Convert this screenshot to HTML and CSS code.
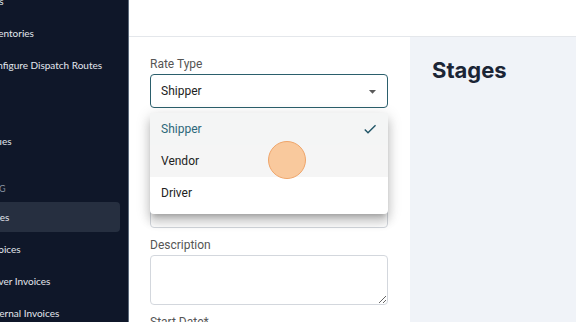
FILE: index.html
```html
<!DOCTYPE html>
<html>
<head>
<meta charset="utf-8">
<link rel="stylesheet" href="styles.css">
</head>
<body>
<aside class="sidebar">
  <nav class="nav">
    <div class="item">Bins</div>
    <div class="item">Inventories</div>
    <div class="item">Configure Dispatch Routes</div>
    <div class="section">MISC</div>
    <div class="item">Issues</div>
    <div class="section">BILLING</div>
    <div class="item active">Rates</div>
    <div class="item">Invoices</div>
    <div class="item">Driver Invoices</div>
    <div class="item">External Invoices</div>
  </nav>
</aside>
<main class="main">
  <header class="topbar"></header>
  <div class="content">
    <section class="form">
      <div class="field select-field">
        <label class="label">Rate Type</label>
        <div class="select">
          <span>Shipper</span>
          <svg class="arrow" viewBox="0 0 24 24" width="17" height="17"><path d="M7 10l5 5 5-5z" fill="#5a5a5a"/></svg>
        </div>
        <ul class="menu">
          <li class="opt selected">Shipper
            <svg class="check" viewBox="0 0 24 24" width="16" height="16"><path d="M9 16.17 4.83 12l-1.42 1.41L9 19 21 7l-1.41-1.41z" fill="#1f5466"/></svg>
          </li>
          <li class="opt hover">Vendor</li>
          <li class="opt">Driver</li>
        </ul>
      </div>
      <div class="field">
        <label class="label">Name*</label>
        <div class="input"></div>
      </div>
      <div class="field">
        <label class="label">Code</label>
        <div class="input"></div>
      </div>
      <div class="field">
        <label class="label">Description</label>
        <textarea class="textarea"></textarea>
      </div>
      <div class="field">
        <label class="label">Start Date*</label>
        <div class="input"></div>
      </div>
    </section>
    <section class="stages">
      <h2 class="stages-title">Stages</h2>
    </section>
  </div>
</main>
<div class="cursor"></div>
</body>
</html>
```
FILE: styles.css
```css
* { box-sizing: border-box; }
html, body { margin: 0; padding: 0; }
body {
  width: 576px;
  height: 322px;
  overflow: hidden;
  display: flex;
  background: #fff;
}
.sidebar {
  width: 129px;
  flex: none;
  height: 322px;
  background: #0f1729;
  border-right: 1px solid #5d6b7c;
  overflow: hidden;
}
.nav {
  margin-top: -14px;
  margin-left: -49px;
  margin-right: 8px;
  display: flex;
  flex-direction: column;
  font-family: "Lato", "DejaVu Sans", sans-serif;
}
.item {
  height: 30px;
  margin-bottom: 2px;
  padding-left: 34px;
  display: flex;
  align-items: center;
  font-size: 10px;
  color: #e3e7ee;
  white-space: nowrap;
  border-radius: 4px;
}
.item.active { background: #262f40; }
.section {
  margin-top: 16px;
  height: 28px;
  padding-left: 18px;
  display: flex;
  align-items: center;
  font-size: 9px;
  letter-spacing: 0.5px;
  color: #8891a1;
  white-space: nowrap;
}
.main {
  flex: 1;
  display: flex;
  flex-direction: column;
  min-width: 0;
}
.topbar {
  height: 37px;
  flex: none;
  border-bottom: 1px solid #e4e7eb;
}
.content {
  flex: 1;
  display: flex;
  min-height: 0;
}
.form {
  width: 281px;
  flex: none;
  padding: 19px 0 0 21px;
  display: flex;
  flex-direction: column;
  gap: 9px;
  font-family: "Roboto", sans-serif;
}
.field {
  position: relative;
  width: 238px;
  display: flex;
  flex-direction: column;
  gap: 2px;
}
.label {
  font-size: 12px;
  line-height: 16px;
  color: #555;
}
.select {
  height: 34px;
  border: 1px solid #2b5f6c;
  border-radius: 4px;
  padding: 0 6px 0 10px;
  display: flex;
  align-items: center;
  justify-content: space-between;
  font-size: 12px;
  color: #222;
}
.input {
  height: 33px;
  border: 1px solid #d3d7dd;
  border-radius: 4px;
}
.textarea {
  height: 50px;
  border: 1px solid #d3d7dd;
  border-radius: 4px;
  resize: vertical;
  outline: none;
  font-family: inherit;
}
.menu {
  position: absolute;
  left: 0;
  top: 57px;
  width: 238px;
  margin: 0;
  padding: 0 0 5px;
  list-style: none;
  background: #fff;
  border-radius: 4px;
  box-shadow: 0 5px 5px -3px rgba(0,0,0,0.2), 0 8px 10px 1px rgba(0,0,0,0.14), 0 3px 14px 2px rgba(0,0,0,0.12);
  z-index: 5;
}
.opt {
  height: 32px;
  padding: 0 10px 0 11px;
  display: flex;
  align-items: center;
  justify-content: space-between;
  font-size: 12px;
  color: #222;
}
.opt.selected { background: #f4f5f5; color: #2c6779; }
.opt.hover { background: #f5f5f5; }
.stages {
  flex: 1;
  background: #f0f3f8;
  padding: 19px 0 0 22px;
}
.stages-title {
  margin: 0;
  font-family: "Inter", sans-serif;
  font-weight: 700;
  font-size: 22px;
  line-height: 28px;
  color: #1b2536;
}
.cursor {
  position: absolute;
  left: 268px;
  top: 141px;
  width: 38px;
  height: 38px;
  border-radius: 50%;
  background: rgba(250, 190, 135, 0.8);
  border: 1px solid #efa56a;
  z-index: 10;
}
```
